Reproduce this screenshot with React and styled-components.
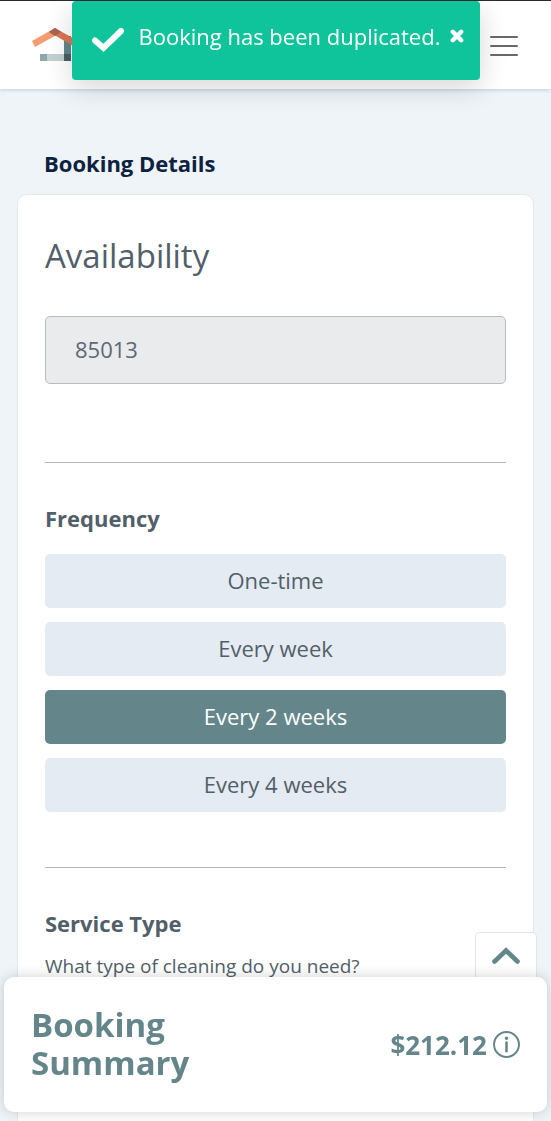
import React, { useState } from 'react'
import styled, { createGlobalStyle } from 'styled-components'

const frequencies = ['One-time', 'Every week', 'Every 2 weeks', 'Every 4 weeks']

function Logo() {
  return (
    <svg width="54" height="34" viewBox="0 0 54 34" aria-hidden="true">
      <path d="M0 13 L23 0 L28 5 L3 19 Z" fill="#f39c72" />
      <path d="M32 8 H39 V26 H32 Z" fill="#64868a" />
      <path d="M23 0 L46 13 L43 19 L17 4 Z" fill="#d97755" />
      <path d="M23 0 L29 4 L23 8 L17 4 Z" fill="#a9644e" />
      <path d="M8 26 H39 V33 H8 Z" fill="#c1d0d0" />
      <path d="M8 26 H15 V33 H8 Z" fill="#90a7aa" />
      <path d="M32 26 H39 V33 H32 Z" fill="#485f65" />
    </svg>
  )
}

function App() {
  const [frequency, setFrequency] = useState('Every 2 weeks')
  const [showToast, setShowToast] = useState(true)

  return (
    <>
      <GlobalStyle />
      <Header>
        <LogoLink href="#" aria-label="Home">
          <Logo />
        </LogoLink>
        <MenuButton type="button" aria-label="Open menu">
          <span />
          <span />
          <span />
        </MenuButton>
      </Header>

      <Main>
        <PageTitle>Booking Details</PageTitle>
        <Card>
          <Section>
            <SectionTitle>Availability</SectionTitle>
            <ZipInput aria-label="Zip code" defaultValue="85013" disabled />
          </Section>
          <Section>
            <Label>Frequency</Label>
            <Options>
              {frequencies.map((name) => (
                <Option
                  key={name}
                  type="button"
                  $selected={name === frequency}
                  aria-pressed={name === frequency}
                  onClick={() => setFrequency(name)}
                >
                  {name}
                </Option>
              ))}
            </Options>
          </Section>
          <Section>
            <Label>Service Type</Label>
            <Hint>What type of cleaning do you need?</Hint>
          </Section>
        </Card>
      </Main>

      {showToast && (
        <Toast role="status">
          <svg width="34" height="26" viewBox="0 0 34 26" aria-hidden="true">
            <path
              d="M4 13.5 L12.5 21 L30 4"
              fill="none"
              stroke="#fff"
              strokeWidth="6"
              strokeLinecap="round"
            />
          </svg>
          <ToastText>Booking has been duplicated.</ToastText>
          <CloseButton type="button" aria-label="Close" onClick={() => setShowToast(false)}>
            <svg width="14" height="14" viewBox="0 0 14 14">
              <path d="M2.8 2.8 L11.2 11.2 M11.2 2.8 L2.8 11.2" stroke="#fff" strokeWidth="4.4" strokeLinecap="round" />
            </svg>
          </CloseButton>
        </Toast>
      )}

      <SummaryDock>
        <SummaryToggle type="button" aria-label="Show summary">
          <svg width="28" height="18" viewBox="0 0 28 18">
            <path d="M2.5 14.5 L14 3.5 L25.5 14.5" fill="none" stroke="#64868a" strokeWidth="4.6" strokeLinecap="round" />
          </svg>
        </SummaryToggle>
        <Summary>
          <SummaryTitle>Booking Summary</SummaryTitle>
          <Price>
            $212.12
            <InfoButton type="button" aria-label="Price details">
              <svg width="27" height="27" viewBox="0 0 26 26" fill="none" stroke="#64868a">
                <circle cx="13" cy="13" r="12" strokeWidth="1.9" />
                <path d="M13 11 V19.5" strokeWidth="2.4" strokeLinecap="round" />
                <circle cx="13" cy="7" r="1.6" fill="#64868a" stroke="none" />
              </svg>
            </InfoButton>
          </Price>
        </Summary>
      </SummaryDock>
    </>
  )
}

const GlobalStyle = createGlobalStyle`
  * {
    box-sizing: border-box;
  }

  body {
    margin: 0;
    background: #eef4f8;
    color: #525f6a;
    font-family: 'Open Sans', sans-serif;
    scrollbar-width: none;
  }

  button {
    font-family: inherit;
    cursor: pointer;
  }
`

const Header = styled.header`
  display: flex;
  align-items: center;
  justify-content: space-between;
  height: 89px;
  padding: 0 33px 0 32px;
  background: #fff;
  border-top: 1px solid #2b2a2e;
  box-shadow: 0 1px 4px rgba(0, 0, 0, 0.16);
`

const LogoLink = styled.a`
  display: flex;
`

const MenuButton = styled.button`
  display: flex;
  flex-direction: column;
  gap: 7px;
  padding: 6px 0 4px;
  border: none;
  background: none;

  span {
    width: 28px;
    height: 2px;
    border-radius: 1px;
    background: #6b686b;
  }
`

const Main = styled.main`
  padding: 59px 17px 0;
`

const PageTitle = styled.h1`
  margin: 0 27px 16px;
  color: #0d2240;
  font-size: 22px;
  font-weight: 700;
  line-height: 30px;
`

const Card = styled.div`
  padding: 37px 27px 180px;
  border: 1px solid #e7e8ea;
  border-radius: 10px;
  background: #fff;
`

const Section = styled.section`
  & + & {
    margin-top: 55px;
    padding-top: 40px;
    border-top: 1px solid #b3b5b7;
  }

  &:first-child {
    padding-bottom: 23px;
  }
`

const SectionTitle = styled.h2`
  margin: 0 0 36px;
  font-size: 33px;
  font-weight: 400;
  line-height: 48px;
`

const ZipInput = styled.input`
  display: block;
  width: 100%;
  height: 68px;
  padding: 0 29px 2px;
  border: 1px solid #b9bcbe;
  border-radius: 5px;
  background: #e9ebed;
  color: #5d6874;
  font-family: inherit;
  font-size: 22px;
`

const Label = styled.h3`
  margin: 0;
  font-size: 22px;
  font-weight: 700;
  line-height: 30px;
`

const Options = styled.div`
  display: flex;
  flex-direction: column;
  gap: 14px;
  margin-top: 21px;
`

const Option = styled.button`
  height: 54px;
  padding: 0 6px 2px;
  border: none;
  border-radius: 5px;
  background: ${(props) => (props.$selected ? '#64868a' : '#e4ebf2')};
  color: ${(props) => (props.$selected ? '#fff' : '#525f6a')};
  font-size: 22px;
`

const Hint = styled.p`
  margin: 13px 0 0;
  font-size: 19px;
  line-height: 30px;
`

const Toast = styled.div`
  position: fixed;
  top: 1px;
  left: 50%;
  display: flex;
  width: 408px;
  max-width: 100%;
  height: 79px;
  padding: 20px 16px 20px 19px;
  transform: translateX(-50%);
  border-radius: 4px;
  background: #0fc39a;
  color: #fff;
  box-shadow: 0 8px 28px rgba(0, 0, 0, 0.16);

  > svg {
    flex: none;
    margin-top: 6px;
  }
`

const ToastText = styled.span`
  flex: 1;
  margin-left: 14px;
  font-size: 22px;
  line-height: 30px;
  white-space: nowrap;
`

const CloseButton = styled.button`
  display: flex;
  align-self: flex-start;
  margin-top: 8px;
  padding: 0;
  border: none;
  background: none;
`

const SummaryDock = styled.aside`
  position: fixed;
  right: 4px;
  bottom: 9px;
  left: 4px;
  display: flex;
  flex-direction: column;
  align-items: flex-end;
`

const SummaryToggle = styled.button`
  display: flex;
  align-items: center;
  justify-content: center;
  width: 62px;
  height: 45px;
  padding: 2px 0 0;
  margin-right: 10px;
  border: 1px solid #e3e5e7;
  border-bottom: none;
  border-radius: 5px 5px 0 0;
  background: #fff;
`

const Summary = styled.div`
  display: flex;
  align-items: center;
  justify-content: space-between;
  width: 100%;
  height: 135px;
  padding: 0 27px;
  border-radius: 10px;
  background: #fff;
  color: #64868a;
  box-shadow: 0 0 14px rgba(0, 0, 0, 0.18);
`

const SummaryTitle = styled.h2`
  width: 200px;
  margin: 0 0 2px;
  font-size: 33px;
  font-weight: 700;
  line-height: 38px;
`

const Price = styled.div`
  display: flex;
  align-items: center;
  gap: 6px;
  font-size: 26px;
  font-weight: 700;
`

const InfoButton = styled.button`
  display: flex;
  padding: 0;
  border: none;
  background: none;
`

export default App
